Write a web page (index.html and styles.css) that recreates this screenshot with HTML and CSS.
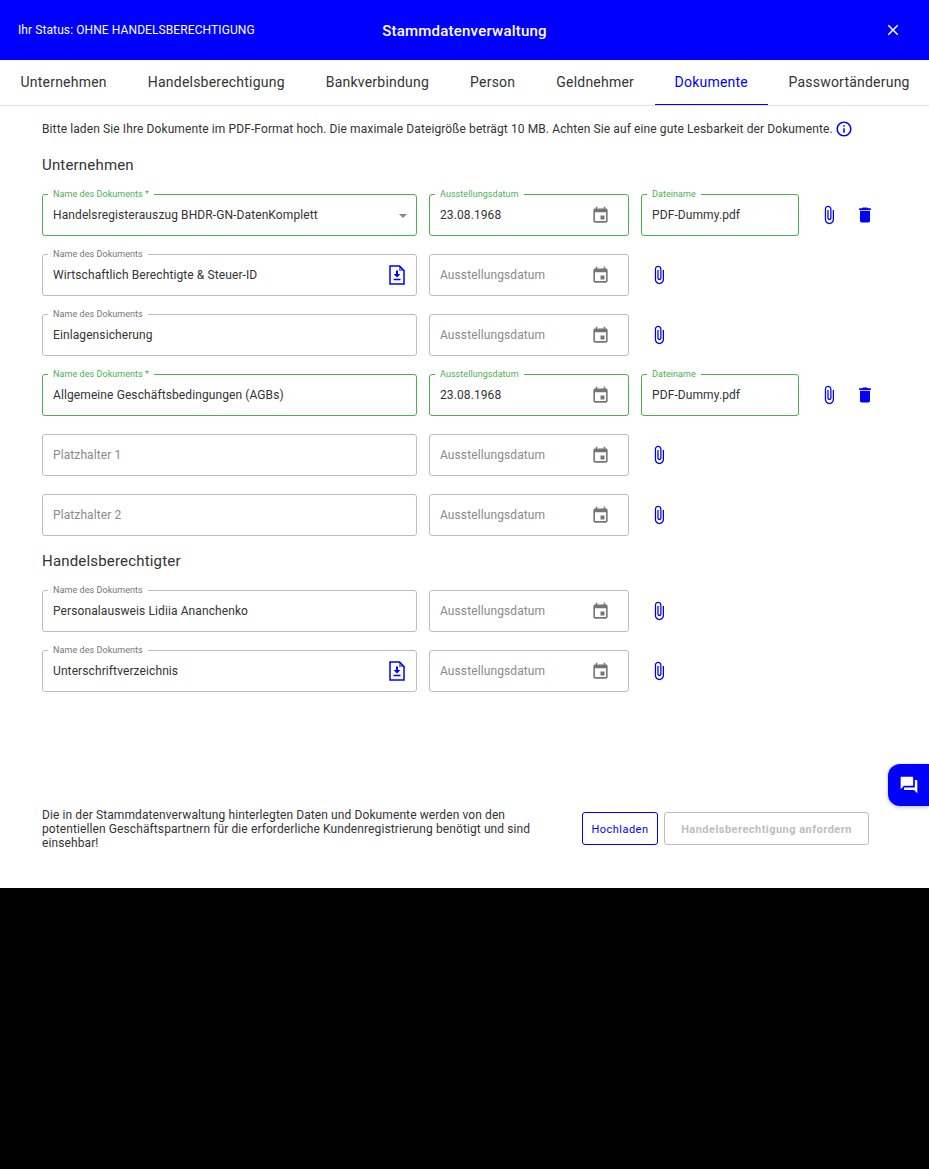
FILE: index.html
```html
<!DOCTYPE html>
<html lang="de">
<head>
<meta charset="utf-8">
<title>Stammdatenverwaltung</title>
<link rel="stylesheet" href="styles.css">
</head>
<body>
<svg class="defs" width="0" height="0" aria-hidden="true">
  <symbol id="i-event" viewBox="0 0 24 24"><path d="M17 12h-5v5h5v-5zM16 1v2H8V1H6v2H5c-1.11 0-1.99.9-1.99 2L3 19c0 1.1.89 2 2 2h14c1.1 0 2-.9 2-2V5c0-1.1-.9-2-2-2h-1V1h-2zm3 18H5V8h14v11z"/></symbol>
  <symbol id="i-clip" viewBox="0 0 24 24"><path d="M16.5 6v11.5c0 2.21-1.79 4-4 4s-4-1.79-4-4V5c0-1.38 1.12-2.5 2.5-2.5s2.5 1.12 2.5 2.5v10.5c0 .55-.45 1-1 1s-1-.45-1-1V6H10v9.5c0 1.38 1.12 2.5 2.5 2.5s2.5-1.12 2.5-2.5V5c0-2.21-1.79-4-4-4S7 2.79 7 5v12.5c0 3.04 2.46 5.5 5.5 5.5s5.5-2.46 5.5-5.5V6h-1.5z"/></symbol>
  <symbol id="i-del" viewBox="0 0 24 24"><path d="M6 19c0 1.1.9 2 2 2h8c1.1 0 2-.9 2-2V7H6v12zM19 4h-3.5l-1-1h-5l-1 1H5v2h14V4z"/></symbol>
  <symbol id="i-doc" viewBox="0 0 16 20"><path d="M1 1h9.5L15 5.5V19H1z" fill="none" stroke="currentColor" stroke-width="1.5"/><path d="M10 1h1l4 4v1h-5z" opacity=".55"/><path d="M7 5.5h2v3.5h2.4L8 12.4 4.6 9H7zM4.5 13.8h7v1.4h-7z"/></symbol>
</svg>
<div class="modal">
  <header class="topbar">
    <span class="status">Ihr Status: OHNE HANDELSBERECHTIGUNG</span>
    <h1 class="title">Stammdatenverwaltung</h1>
    <svg class="close" viewBox="0 0 24 24"><path d="M19 6.41L17.59 5 12 10.59 6.41 5 5 6.41 10.59 12 5 17.59 6.41 19 12 13.41 17.59 19 19 17.59 13.41 12z"/></svg>
  </header>
  <nav class="tabs">
    <a class="tab">Unternehmen</a>
    <a class="tab">Handelsberechtigung</a>
    <a class="tab">Bankverbindung</a>
    <a class="tab">Person</a>
    <a class="tab">Geldnehmer</a>
    <a class="tab active">Dokumente</a>
    <a class="tab">Passwortänderung</a>
  </nav>
  <main class="content">
    <p class="intro">Bitte laden Sie Ihre Dokumente im PDF-Format hoch. Die maximale Dateigröße beträgt 10 MB. Achten Sie auf eine gute Lesbarkeit der Dokumente.
      <svg class="info" viewBox="0 0 24 24"><path d="M11 7h2v2h-2zm0 4h2v6h-2zm1-9C6.48 2 2 6.48 2 12s4.48 10 10 10 10-4.48 10-10S17.52 2 12 2zm0 18c-4.41 0-8-3.59-8-8s3.59-8 8-8 8 3.59 8 8-3.59 8-8 8z"/></svg>
    </p>
    <h2 class="section first">Unternehmen</h2>
    <div class="rows">
      <div class="row">
        <div class="field name ok"><span class="label">Name des Dokuments *</span><span class="value">Handelsregisterauszug BHDR-GN-DatenKomplett</span><i class="caret"></i></div>
        <div class="field date ok"><span class="label">Ausstellungsdatum</span><span class="value">23.08.1968</span><svg class="cal"><use href="#i-event"/></svg></div>
        <div class="field file ok"><span class="label">Dateiname</span><span class="value">PDF-Dummy.pdf</span></div>
        <svg class="act clip"><use href="#i-clip"/></svg>
        <svg class="act del"><use href="#i-del"/></svg>
      </div>
      <div class="row">
        <div class="field name"><span class="label">Name des Dokuments</span><span class="value">Wirtschaftlich Berechtigte &amp; Steuer-ID</span><svg class="doc"><use href="#i-doc"/></svg></div>
        <div class="field date"><span class="value ph">Ausstellungsdatum</span><svg class="cal"><use href="#i-event"/></svg></div>
        <svg class="act clip"><use href="#i-clip"/></svg>
      </div>
      <div class="row">
        <div class="field name"><span class="label">Name des Dokuments</span><span class="value">Einlagensicherung</span></div>
        <div class="field date"><span class="value ph">Ausstellungsdatum</span><svg class="cal"><use href="#i-event"/></svg></div>
        <svg class="act clip"><use href="#i-clip"/></svg>
      </div>
      <div class="row">
        <div class="field name ok"><span class="label">Name des Dokuments *</span><span class="value">Allgemeine Geschäftsbedingungen (AGBs)</span></div>
        <div class="field date ok"><span class="label">Ausstellungsdatum</span><span class="value">23.08.1968</span><svg class="cal"><use href="#i-event"/></svg></div>
        <div class="field file ok"><span class="label">Dateiname</span><span class="value">PDF-Dummy.pdf</span></div>
        <svg class="act clip"><use href="#i-clip"/></svg>
        <svg class="act del"><use href="#i-del"/></svg>
      </div>
      <div class="row">
        <div class="field name"><span class="value ph">Platzhalter 1</span></div>
        <div class="field date"><span class="value ph">Ausstellungsdatum</span><svg class="cal"><use href="#i-event"/></svg></div>
        <svg class="act clip"><use href="#i-clip"/></svg>
      </div>
      <div class="row">
        <div class="field name"><span class="value ph">Platzhalter 2</span></div>
        <div class="field date"><span class="value ph">Ausstellungsdatum</span><svg class="cal"><use href="#i-event"/></svg></div>
        <svg class="act clip"><use href="#i-clip"/></svg>
      </div>
    </div>
    <h2 class="section second">Handelsberechtigter</h2>
    <div class="rows">
      <div class="row">
        <div class="field name"><span class="label">Name des Dokuments</span><span class="value">Personalausweis Lidiia Ananchenko</span></div>
        <div class="field date"><span class="value ph">Ausstellungsdatum</span><svg class="cal"><use href="#i-event"/></svg></div>
        <svg class="act clip"><use href="#i-clip"/></svg>
      </div>
      <div class="row">
        <div class="field name"><span class="label">Name des Dokuments</span><span class="value">Unterschriftverzeichnis</span><svg class="doc"><use href="#i-doc"/></svg></div>
        <div class="field date"><span class="value ph">Ausstellungsdatum</span><svg class="cal"><use href="#i-event"/></svg></div>
        <svg class="act clip"><use href="#i-clip"/></svg>
      </div>
    </div>
  </main>
  <footer class="foot">
    <p class="note">Die in der Stammdatenverwaltung hinterlegten Daten und Dokumente werden von den potentiellen Geschäftspartnern für die erforderliche Kundenregistrierung benötigt und sind einsehbar!</p>
    <button class="btn primary">Hochladen</button>
    <button class="btn disabled">Handelsberechtigung anfordern</button>
  </footer>
  <div class="chat"><svg viewBox="0 0 24 24"><path d="M21 6h-2v9H6v2c0 .55.45 1 1 1h11l4 4V7c0-.55-.45-1-1-1zm-4 6V3c0-.55-.45-1-1-1H3c-.55 0-1 .45-1 1v14l4-4h10c.55 0 1-.45 1-1z"/></svg></div>
</div>
</body>
</html>
```
FILE: styles.css
```css
* { box-sizing: border-box; }
html, body { margin: 0; height: 100%; background: #000; }
body { font-family: Roboto, "Liberation Sans", sans-serif; color: #333; overflow: hidden; }
.defs { position: absolute; }
.modal { position: relative; width: 929px; height: 888px; background: #fff; display: flex; flex-direction: column; }

.topbar { height: 60px; flex: none; background: #0000ff; color: #fff; display: flex; align-items: center; padding: 0 18px; position: relative; }
.status { font-size: 12px; line-height: 14px; margin-top: -1px; letter-spacing: .09px; }
.title { position: absolute; left: 0; right: 0; margin: 0; text-align: center; font-size: 15px; font-weight: 500; line-height: 62px; letter-spacing: .22px; top: 0; }
.close { width: 18px; height: 18px; fill: #fff; margin-left: auto; margin-right: 9px; position: relative; }

.tabs { height: 46px; flex: none; display: flex; border-bottom: 1px solid #e0e0e0; }
.tab { padding: 0 20.5px; height: 46px; line-height: 44px; font-size: 14px; font-weight: 450; letter-spacing: .22px; color: #333; white-space: nowrap; }
.tab.active { color: #0000ff; border-bottom: 1px solid #0000ff; height: 45px; padding: 0 20px; }

.content { padding: 0 42px; flex: 1; }
.intro { margin: 14px 0 0; font-size: 12px; line-height: 16px; letter-spacing: .105px; display: flex; align-items: center; gap: 2px; white-space: nowrap; }
.info { width: 18px; height: 18px; fill: #0000ff; flex: none; }
.section { margin: 0; font-size: 15px; font-weight: 450; line-height: 20px; letter-spacing: .18px; }
.section.first { margin-top: 17px; margin-bottom: 19px; }
.section.second { margin-top: 15px; margin-bottom: 19px; }

.rows { display: flex; flex-direction: column; gap: 18px; }
.row { display: flex; align-items: center; gap: 12px; height: 42px; }
.field { position: relative; height: 42px; border: 1px solid #bdbdbd; border-radius: 3px; display: flex; align-items: center; padding: 0 10px; flex: none; }
.field.ok { border-color: #4caf50; }
.name { width: 375px; }
.date { width: 200px; }
.file { width: 158px; }
.label { position: absolute; left: 5px; top: -6px; padding: 0 5px; background: #fff; font-size: 9px; line-height: 11px; letter-spacing: .06px; color: #757575; white-space: nowrap; }
.ok .label { color: #4caf50; }
.value { font-size: 12px; letter-spacing: .1px; color: #333; white-space: nowrap; }
.value.ph { color: #8a8a8a; }
.cal { position: absolute; right: 18px; top: 11px; width: 19px; height: 19px; fill: #757575; }
.doc { position: absolute; right: 11px; top: 10px; width: 16px; height: 20px; fill: #0000ff; color: #0000ff; }
.caret { position: absolute; right: 9px; top: 19px; width: 0; height: 0; border-left: 4px solid transparent; border-right: 4px solid transparent; border-top: 4px solid #858585; }
.act { flex: none; fill: #0000ff; }
.clip { width: 20px; height: 20px; margin-left: 8px; }
.del { width: 20px; height: 20px; margin-left: 4px; }

.foot { display: flex; align-items: center; padding: 0 60px 38px 42px; }
.note { margin: 0; width: 500px; font-size: 12px; line-height: 14px; letter-spacing: .1px; }
.btn { height: 33px; margin-top: -2px; font-family: inherit; font-size: 11px; font-weight: 450; letter-spacing: .47px; background: #fff; border-radius: 3px; padding: 2px 0 0; }
.btn.primary { width: 76px; margin-left: 40px; border: 1px solid #0000ff; color: #0000ff; }
.btn.disabled { width: 205px; margin-left: 6px; border: 1px solid #bdbdbd; color: #bdbdbd; font-weight: 700; }

.chat { position: absolute; right: 0; top: 764px; width: 41px; height: 42px; background: #0000ff; border-radius: 12px 0 0 12px; display: flex; align-items: center; justify-content: center; box-shadow: 0 1px 4px rgba(0,0,0,.3); }
.chat svg { width: 20px; height: 20px; fill: #fff; }
```
